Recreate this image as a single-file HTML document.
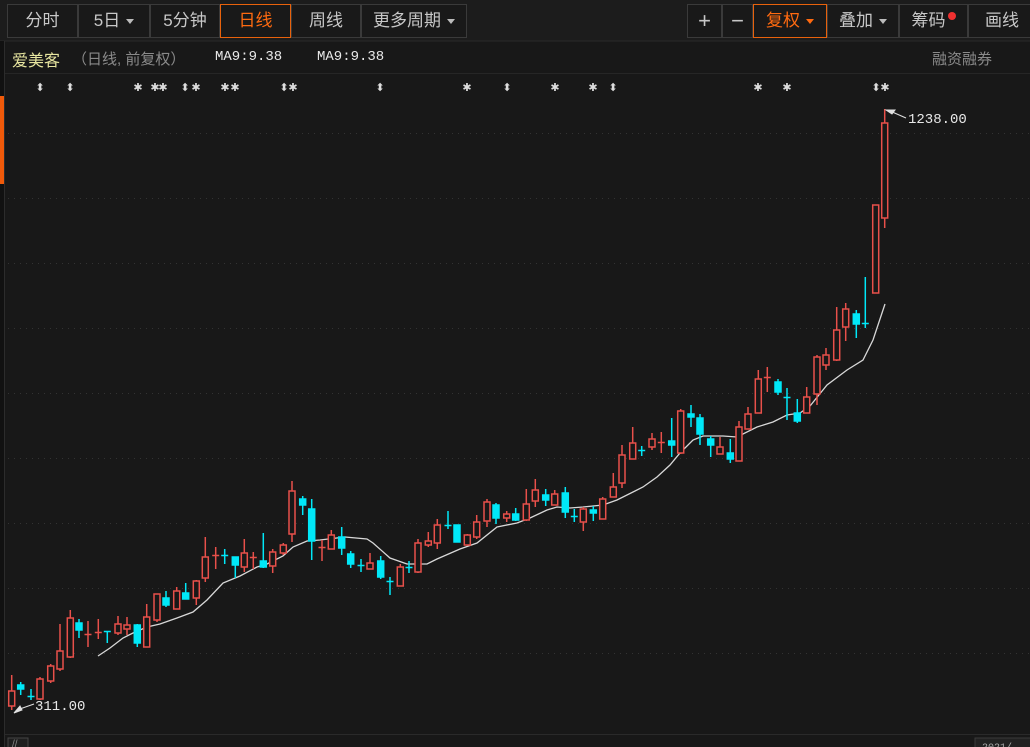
<!DOCTYPE html>
<html><head><meta charset="utf-8"><style>
html,body{margin:0;padding:0;background:#181818;width:1030px;height:747px;overflow:hidden;font-family:"Liberation Sans","Noto Sans CJK SC",sans-serif}
.tb{position:absolute;top:0;left:0;width:1030px;height:41px;background:#1c1c1c}
.b{position:absolute;top:4px;height:32px;border:1px solid #3a3a3a;background:#191919;color:#c8c8c8;font-size:17px;line-height:32px;text-align:center;box-sizing:content-box}
.a{border-color:#e8620c;color:#ff6a10}
.tri{display:inline-block;width:0;height:0;border-left:4px solid transparent;border-right:4px solid transparent;border-top:5px solid #bbb;vertical-align:middle;margin-left:6px}
.a .tri{border-top-color:#ff6a10}
.t{position:absolute;white-space:nowrap}
</style></head><body>
<div class="tb"></div>
<div class="b" style="left:7px;width:69px">分时</div>
<div class="b" style="left:78px;width:70px">5日<span class="tri"></span></div>
<div class="b" style="left:150px;width:68px">5分钟</div>
<div class="b a" style="left:220px;width:69px">日线</div>
<div class="b" style="left:291px;width:68px">周线</div>
<div class="b" style="left:361px;width:104px">更多周期<span class="tri"></span></div>
<div class="b" style="left:687px;width:33px;font-size:22px">+</div>
<div class="b" style="left:722px;width:29px;font-size:22px">−</div>
<div class="b a" style="left:753px;width:72px">复权<span class="tri"></span></div>
<div class="b" style="left:827px;width:70px">叠加<span class="tri"></span></div>
<div class="b" style="left:899px;width:67px">筹码<span style="display:inline-block;width:8px;height:8px;border-radius:4px;background:#f03030;vertical-align:top;margin-top:7px;margin-left:2px"></span></div>
<div class="b" style="left:968px;width:70px;text-align:left;padding-left:16px;width:54px">画线</div>
<svg width="1030" height="747" style="position:absolute;left:0;top:0" xmlns="http://www.w3.org/2000/svg">
<line x1="0" y1="41" x2="1030" y2="41" stroke="#2a2a2a"/>
<line x1="5" y1="73.5" x2="1030" y2="73.5" stroke="#262626"/>
<rect x="0" y="41" width="5" height="706" fill="#111"/>
<line x1="4.5" y1="41" x2="4.5" y2="747" stroke="#2c2c2c"/>
<rect x="0" y="96" width="4" height="88" fill="#f05a0a"/>
<g stroke="#333" stroke-dasharray="1 5">
<line x1="8" y1="133.5" x2="1030" y2="133.5"/><line x1="8" y1="198.5" x2="1030" y2="198.5"/><line x1="8" y1="263.5" x2="1030" y2="263.5"/><line x1="8" y1="328.5" x2="1030" y2="328.5"/><line x1="8" y1="393.5" x2="1030" y2="393.5"/><line x1="8" y1="458.5" x2="1030" y2="458.5"/><line x1="8" y1="523.5" x2="1030" y2="523.5"/><line x1="8" y1="588.5" x2="1030" y2="588.5"/><line x1="8" y1="653.5" x2="1030" y2="653.5"/>
</g>
<line x1="5" y1="734.5" x2="1030" y2="734.5" stroke="#2a2a2a"/>
<rect x="8" y="738" width="20" height="12" fill="#1f1f1f" stroke="#444"/>
<text x="12" y="747" fill="#888" font-size="10">//</text>
<rect x="975" y="738" width="60" height="12" fill="#222" stroke="#3a3a3a"/>
<text x="982" y="750" fill="#aaa" font-size="10" font-family="Liberation Mono">2021/</text>
<g font-family="DejaVu Sans" font-size="11" fill="#ddd" text-anchor="middle">
<text x="40" y="91">⬍</text><text x="70" y="91">⬍</text><text x="138" y="91">✱</text><text x="155" y="91">✱</text><text x="163" y="91">✱</text><text x="185" y="91">⬍</text><text x="196" y="91">✱</text><text x="225" y="91">✱</text><text x="235" y="91">✱</text><text x="284" y="91">⬍</text><text x="293" y="91">✱</text><text x="380" y="91">⬍</text><text x="467" y="91">✱</text><text x="507" y="91">⬍</text><text x="555" y="91">✱</text><text x="593" y="91">✱</text><text x="613" y="91">⬍</text><text x="758" y="91">✱</text><text x="787" y="91">✱</text><text x="876" y="91">⬍</text><text x="885" y="91">✱</text>
</g>
<polyline fill="none" stroke="#d8d8d8" stroke-width="1.3" points="98,656 110,648 123,638 133,633 147,627 160,624 177,618 193,612 207,600 223,583 240,576 257,567 267,564 283,556 293,547 307,541 320,540 345,537 367,539 373,543 390,558 407,564 427,564 437,559 460,549 477,543 497,527 517,523 530,518 547,510 557,507 570,508 583,507 603,505 617,500 643,487 657,477 670,465 680,453 693,440 703,436 723,436 737,437 757,427 773,422 787,415 800,413 810,406 827,385 847,370 863,360 873,340 885,304"/>
<g id="c"></g>
<g stroke-width="1.5">
<!-- candles: R hollow red, C filled cyan -->
<g stroke="#e8504a" fill="#181818">
<line x1="11.7" y1="675" x2="11.7" y2="710"/><rect x="8.7" y="691" width="6" height="15"/>
<line x1="40" y1="677" x2="40" y2="700"/><rect x="37" y="679" width="6" height="20"/>
<line x1="50.7" y1="664" x2="50.7" y2="683"/><rect x="47.7" y="666" width="6" height="15"/>
<line x1="60" y1="624" x2="60" y2="671"/><rect x="57" y="651" width="6" height="18"/>
<line x1="70.3" y1="610" x2="70.3" y2="658"/><rect x="67.3" y="618" width="6" height="39"/>
<line x1="88" y1="621" x2="88" y2="647"/><line x1="84.5" y1="634.5" x2="91.5" y2="634.5"/>
<line x1="98.3" y1="619" x2="98.3" y2="639"/><line x1="94.8" y1="632.5" x2="101.8" y2="632.5"/>
<line x1="118" y1="616" x2="118" y2="635"/><rect x="115" y="624" width="6" height="9"/>
<line x1="127" y1="617" x2="127" y2="635"/><rect x="124" y="625" width="6" height="4"/>
<line x1="146.7" y1="604" x2="146.7" y2="647"/><rect x="143.7" y="617" width="6" height="30"/>
<line x1="157" y1="594" x2="157" y2="622"/><rect x="154" y="594" width="6" height="26"/>
<line x1="176.7" y1="587" x2="176.7" y2="609"/><rect x="173.7" y="591" width="6" height="18"/>
<line x1="196.3" y1="580" x2="196.3" y2="605"/><rect x="193.3" y="581" width="6" height="17"/>
<line x1="205.3" y1="537" x2="205.3" y2="582"/><rect x="202.3" y="557" width="6" height="21"/>
<line x1="215.7" y1="547" x2="215.7" y2="569"/><line x1="212.2" y1="555.5" x2="219.2" y2="555.5"/>
<line x1="244.3" y1="539" x2="244.3" y2="572"/><rect x="241.3" y="553" width="6" height="14"/>
<line x1="253.3" y1="552" x2="253.3" y2="569"/><line x1="249.8" y1="557.5" x2="256.8" y2="557.5"/>
<line x1="272.7" y1="549" x2="272.7" y2="573"/><rect x="269.7" y="552" width="6" height="14"/>
<line x1="283.3" y1="543" x2="283.3" y2="555"/><rect x="280.3" y="545" width="6" height="8"/>
<line x1="292" y1="481" x2="292" y2="542"/><rect x="289" y="491" width="6" height="43"/>
<line x1="322" y1="540" x2="322" y2="561"/><line x1="318.5" y1="547.5" x2="325.5" y2="547.5"/>
<line x1="331.3" y1="530" x2="331.3" y2="549"/><rect x="328.3" y="535" width="6" height="14"/>
<line x1="370" y1="553" x2="370" y2="569"/><rect x="367" y="563" width="6" height="6"/>
<line x1="400.3" y1="564" x2="400.3" y2="586"/><rect x="397.3" y="567" width="6" height="19"/>
<line x1="418" y1="539" x2="418" y2="573"/><rect x="415" y="543" width="6" height="29"/>
<line x1="428.3" y1="532" x2="428.3" y2="547"/><rect x="425.3" y="541" width="6" height="4"/>
<line x1="437.3" y1="519" x2="437.3" y2="549"/><rect x="434.3" y="525" width="6" height="18"/>
<line x1="467.3" y1="534" x2="467.3" y2="545"/><rect x="464.3" y="535" width="6" height="10"/>
<line x1="476.7" y1="515" x2="476.7" y2="539"/><rect x="473.7" y="522" width="6" height="15"/>
<line x1="487" y1="499" x2="487" y2="527"/><rect x="484" y="502" width="6" height="19"/>
<line x1="506.7" y1="511" x2="506.7" y2="522"/><rect x="503.7" y="514" width="6" height="4"/>
<line x1="526.3" y1="489" x2="526.3" y2="521"/><rect x="523.3" y="504" width="6" height="16"/>
<line x1="535.3" y1="479" x2="535.3" y2="507"/><rect x="532.3" y="490" width="6" height="11"/>
<line x1="554.7" y1="490" x2="554.7" y2="505"/><rect x="551.7" y="494" width="6" height="11"/>
<line x1="583.3" y1="507" x2="583.3" y2="531"/><rect x="580.3" y="509" width="6" height="13"/>
<line x1="602.7" y1="497" x2="602.7" y2="519"/><rect x="599.7" y="499" width="6" height="20"/>
<line x1="613.3" y1="473" x2="613.3" y2="497"/><rect x="610.3" y="487" width="6" height="10"/>
<line x1="622" y1="445" x2="622" y2="488"/><rect x="619" y="455" width="6" height="28"/>
<line x1="632.7" y1="427" x2="632.7" y2="459"/><rect x="629.7" y="443" width="6" height="16"/>
<line x1="652" y1="433" x2="652" y2="450"/><rect x="649" y="439" width="6" height="8"/>
<line x1="661.3" y1="432" x2="661.3" y2="453"/><line x1="657.8" y1="442.5" x2="664.8" y2="442.5"/>
<line x1="680.7" y1="409" x2="680.7" y2="454"/><rect x="677.7" y="411" width="6" height="42"/>
<line x1="720" y1="437" x2="720" y2="454"/><rect x="717" y="447" width="6" height="7"/>
<line x1="739" y1="421" x2="739" y2="461"/><rect x="736" y="427" width="6" height="34"/>
<line x1="748" y1="407" x2="748" y2="429"/><rect x="745" y="414" width="6" height="15"/>
<line x1="758.3" y1="370" x2="758.3" y2="413"/><rect x="755.3" y="379" width="6" height="34"/>
<line x1="767.3" y1="367" x2="767.3" y2="392"/><line x1="763.8" y1="377.5" x2="770.8" y2="377.5"/>
<line x1="806.7" y1="387" x2="806.7" y2="413"/><rect x="803.7" y="397" width="6" height="16"/>
<line x1="817" y1="355" x2="817" y2="405"/><rect x="814" y="357" width="6" height="37"/>
<line x1="826" y1="348" x2="826" y2="370"/><rect x="823" y="355" width="6" height="10"/>
<line x1="836.7" y1="307" x2="836.7" y2="361"/><rect x="833.7" y="330" width="6" height="30"/>
<line x1="845.7" y1="303" x2="845.7" y2="341"/><rect x="842.7" y="309" width="6" height="18"/>
<rect x="872.7" y="205" width="6" height="88"/>
<line x1="884.7" y1="109" x2="884.7" y2="228"/><rect x="881.7" y="123" width="6" height="95"/>
</g>
<g stroke="#00e8f8" fill="#00e8f8">
<line x1="20.7" y1="682" x2="20.7" y2="695"/><rect x="17.7" y="685" width="6" height="4"/>
<line x1="31" y1="689" x2="31" y2="700"/><line x1="27.5" y1="696.5" x2="34.5" y2="696.5"/>
<line x1="79" y1="619" x2="79" y2="638"/><rect x="76" y="623" width="6" height="7"/>
<line x1="107.3" y1="631" x2="107.3" y2="643"/><line x1="103.8" y1="631.5" x2="110.8" y2="631.5"/>
<line x1="137.3" y1="624" x2="137.3" y2="647"/><rect x="134.3" y="625" width="6" height="18"/>
<line x1="166" y1="591" x2="166" y2="607"/><rect x="163" y="598" width="6" height="7"/>
<line x1="185.7" y1="583" x2="185.7" y2="599"/><rect x="182.7" y="593" width="6" height="6"/>
<line x1="224.7" y1="549" x2="224.7" y2="564"/><line x1="221.2" y1="555.5" x2="228.2" y2="555.5"/>
<line x1="235.3" y1="557" x2="235.3" y2="578"/><rect x="232.3" y="557" width="6" height="8"/>
<line x1="263.3" y1="533" x2="263.3" y2="568"/><rect x="260.3" y="561" width="6" height="6"/>
<line x1="302.7" y1="496" x2="302.7" y2="515"/><rect x="299.7" y="499" width="6" height="6"/>
<line x1="311.7" y1="499" x2="311.7" y2="560"/><rect x="308.7" y="509" width="6" height="32"/>
<line x1="341.7" y1="527" x2="341.7" y2="555"/><rect x="338.7" y="537" width="6" height="11"/>
<line x1="350.7" y1="551" x2="350.7" y2="568"/><rect x="347.7" y="554" width="6" height="10"/>
<line x1="361" y1="559" x2="361" y2="572"/><line x1="357.5" y1="565.5" x2="364.5" y2="565.5"/>
<line x1="380.7" y1="556" x2="380.7" y2="579"/><rect x="377.7" y="561" width="6" height="16"/>
<line x1="390" y1="577" x2="390" y2="595"/><line x1="386.5" y1="581.5" x2="393.5" y2="581.5"/>
<line x1="409" y1="561" x2="409" y2="573"/><line x1="405.5" y1="567.5" x2="412.5" y2="567.5"/>
<line x1="448" y1="511" x2="448" y2="529"/><line x1="444.5" y1="525.5" x2="451.5" y2="525.5"/>
<rect x="454" y="525" width="6" height="17"/>
<line x1="496" y1="503" x2="496" y2="524"/><rect x="493" y="505" width="6" height="13"/>
<line x1="515.7" y1="508" x2="515.7" y2="521"/><rect x="512.7" y="514" width="6" height="6"/>
<line x1="545.7" y1="489" x2="545.7" y2="506"/><rect x="542.7" y="495" width="6" height="5"/>
<line x1="565.3" y1="487" x2="565.3" y2="518"/><rect x="562.3" y="493" width="6" height="19"/>
<line x1="574.3" y1="509" x2="574.3" y2="522"/><line x1="570.8" y1="516.5" x2="577.8" y2="516.5"/>
<line x1="593.3" y1="506" x2="593.3" y2="521"/><rect x="590.3" y="510" width="6" height="3"/>
<line x1="641.7" y1="446" x2="641.7" y2="456"/><line x1="638.2" y1="450.5" x2="645.2" y2="450.5"/>
<line x1="671.7" y1="418" x2="671.7" y2="457"/><rect x="668.7" y="441" width="6" height="4"/>
<line x1="691" y1="405" x2="691" y2="427"/><rect x="688" y="414" width="6" height="3"/>
<line x1="700" y1="414" x2="700" y2="445"/><rect x="697" y="418" width="6" height="16"/>
<line x1="710.7" y1="436" x2="710.7" y2="457"/><rect x="707.7" y="439" width="6" height="6"/>
<line x1="730.3" y1="439" x2="730.3" y2="463"/><rect x="727.3" y="453" width="6" height="6"/>
<line x1="778" y1="379" x2="778" y2="395"/><rect x="775" y="382" width="6" height="10"/>
<line x1="787" y1="388" x2="787" y2="420"/><line x1="783.5" y1="397.5" x2="790.5" y2="397.5"/>
<line x1="797.3" y1="399" x2="797.3" y2="423"/><rect x="794.3" y="413" width="6" height="8"/>
<line x1="856.3" y1="310" x2="856.3" y2="338"/><rect x="853.3" y="314" width="6" height="10"/>
<line x1="865.3" y1="277" x2="865.3" y2="328"/><line x1="861.8" y1="323.5" x2="868.8" y2="323.5"/>
</g>
</g>
<g stroke="#e0e0e0" fill="#e0e0e0" stroke-width="1">
<line x1="890" y1="111" x2="906" y2="118"/><polygon points="886,110 895,110 892,114"/>
<line x1="17" y1="710" x2="34" y2="704"/><polygon points="14,713 22,710 20,706"/>
</g>
<g font-family="Liberation Mono" font-size="14" fill="#e8e8e8">
<text x="908" y="123">1238.00</text>
<text x="35" y="710">311.00</text>
</g>
</svg>
<div class="t" style="left:12px;top:47px;font-size:16px;color:#e8e6a0">爱美客</div>
<div class="t" style="left:72px;top:48px;font-size:15px;color:#8a8a8a">（日线, 前复权）</div>
<div class="t" style="left:215px;top:49px;font-size:14px;color:#e8e8e8;font-family:'Liberation Mono',monospace">MA9:9.38</div>
<div class="t" style="left:317px;top:49px;font-size:14px;color:#e8e8e8;font-family:'Liberation Mono',monospace">MA9:9.38</div>
<div class="t" style="left:932px;top:48px;font-size:15px;color:#8a8a8a">融资融券</div>
</body></html>
